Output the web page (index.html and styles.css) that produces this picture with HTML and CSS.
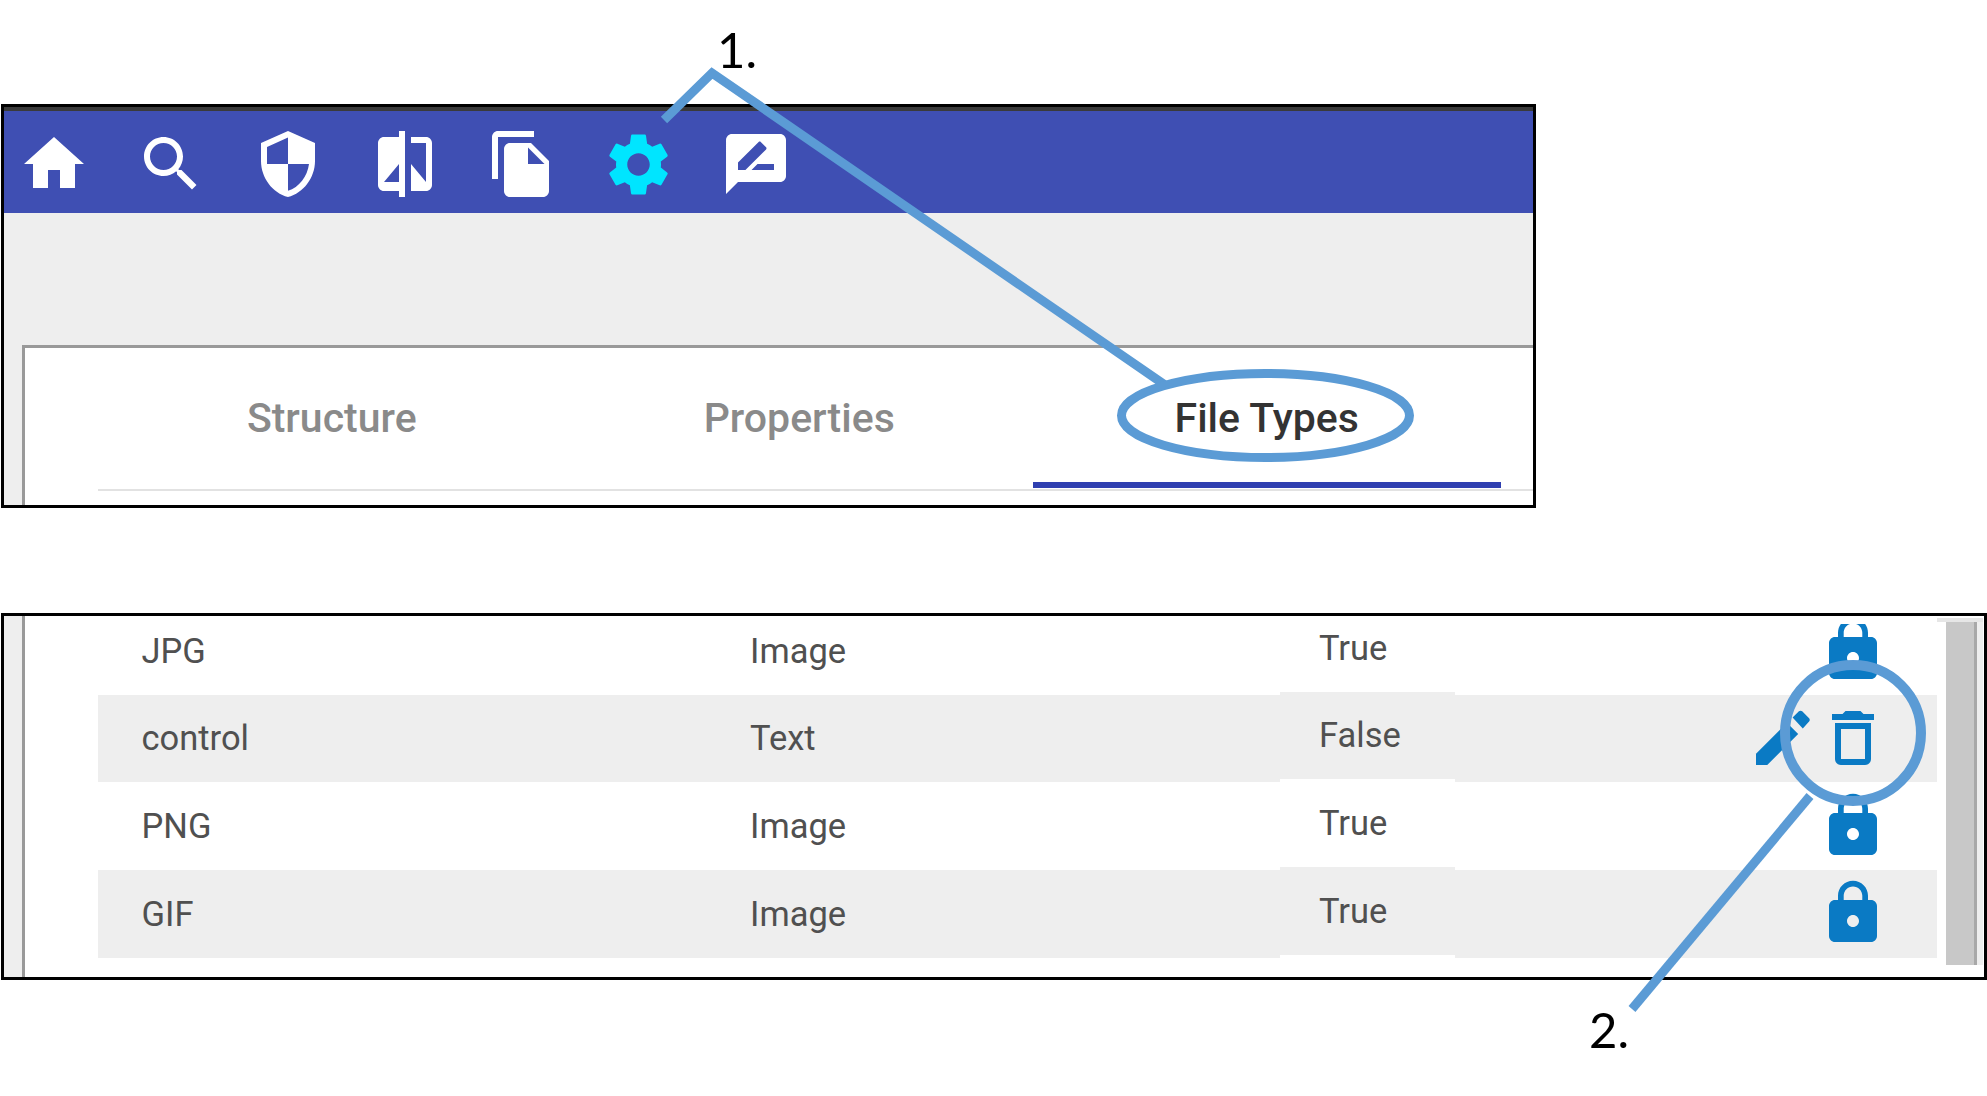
FILE: index.html
```html
<!DOCTYPE html>
<html lang="en">
<head>
    <meta charset="UTF-8">
    <meta name="viewport" content="width=device-width, initial-scale=1.0">
    <title>File Types</title>
    <link rel="stylesheet" href="styles.css">
</head>
<body>
    <div class="frame frame-top">
        <div class="toolbar">
            <svg class="icon" viewBox="0 0 24 24"><path d="M10 20v-6h4v6h5v-8h3L12 3 2 12h3v8z"/></svg>
            <svg class="icon" viewBox="0 0 24 24"><path d="M15.5 14h-.79l-.28-.27C15.41 12.59 16 11.11 16 9.5 16 5.91 13.09 3 9.5 3S3 5.91 3 9.5 5.91 16 9.5 16c1.61 0 3.09-.59 4.23-1.57l.27.28v.79l5 4.99L20.49 19l-4.99-5zm-6 0C7.01 14 5 11.99 5 9.5S7.01 5 9.5 5 14 7.01 14 9.5 11.99 14 9.5 14z"/></svg>
            <svg class="icon" viewBox="0 0 24 24"><path d="M12 1L3 5v6c0 5.55 3.84 10.74 9 12 5.16-1.26 9-6.45 9-12V5l-9-4zm0 10.99h7c-.53 4.12-3.28 7.79-7 8.94V12H5V6.3l7-3.11v8.8z"/></svg>
            <svg class="icon" viewBox="0 0 24 24"><path d="M10 3H5c-1.1 0-2 .9-2 2v14c0 1.1.9 2 2 2h5v2h2V1h-2v2zm0 15H5l5-6v6zm9-15h-5v2h5v13l-5-6v9h5c1.1 0 2-.9 2-2V5c0-1.1-.9-2-2-2z"/></svg>
            <svg class="icon" viewBox="0 0 24 24"><path d="M16 1H4c-1.1 0-2 .9-2 2v14h2V3h12V1zm-1 4l6 6v10c0 1.1-.9 2-2 2H7.99C6.89 23 6 22.1 6 21l.01-14c0-1.1.89-2 1.99-2h7zm-1 7h5.5L14 6.5V12z"/></svg>
            <svg class="icon icon-active" viewBox="0 0 24 24"><path d="M19.14 12.94c.04-.3.06-.61.06-.94 0-.32-.02-.64-.07-.94l2.03-1.58c.18-.14.23-.41.12-.61l-1.92-3.32c-.12-.22-.37-.29-.59-.22l-2.39.96c-.5-.38-1.03-.7-1.62-.94l-.36-2.54c-.04-.24-.24-.41-.48-.41h-3.84c-.24 0-.43.17-.47.41l-.36 2.54c-.59.24-1.13.57-1.62.94l-2.39-.96c-.22-.08-.47 0-.59.22L2.74 8.87c-.12.21-.08.47.12.61l2.03 1.58c-.05.3-.09.63-.09.94s.02.64.07.94l-2.03 1.58c-.18.14-.23.41-.12.61l1.92 3.32c.12.22.37.29.59.22l2.39-.96c.5.38 1.03.7 1.62.94l.36 2.54c.05.24.24.41.48.41h3.84c.24 0 .44-.17.47-.41l.36-2.54c.59-.24 1.13-.56 1.62-.94l2.39.96c.22.08.47 0 .59-.22l1.92-3.32c.12-.22.07-.47-.12-.61l-2.01-1.58zM12 15.6c-1.98 0-3.6-1.62-3.6-3.6s1.62-3.6 3.6-3.6 3.6 1.62 3.6 3.6-1.62 3.6-3.6 3.6z"/></svg>
            <svg class="icon" viewBox="0 0 24 24"><path d="M20 2H4c-1.1 0-1.99.9-1.99 2L2 22l4-4h14c1.1 0 2-.9 2-2V4c0-1.1-.9-2-2-2zM6 14v-2.47l6.88-6.88c.2-.2.51-.2.71 0l1.77 1.77c.2.2.2.51 0 .71L8.47 14H6zm12 0h-7.5l2-2H18v2z"/></svg>
        </div>
        <div class="band"></div>
        <div class="panel">
            <div class="tabs">
                <a class="tab">Structure</a>
                <a class="tab">Properties</a>
                <a class="tab active">File Types</a>
            </div>
        </div>
    </div>

    <div class="frame frame-bottom">
        <div class="sheet">
            <div class="rows-clip">
                <div class="rows">
                    <div class="row">
                        <div class="cell name">JPG</div>
                        <div class="cell kind">Image</div>
                        <div class="cell flag">True</div>
                        <div class="cell actions">
                            <svg class="action lock" viewBox="0 0 24 24"><path d="M18 8h-1V6.6c0-2.76-2.24-5-5-5s-5 2.24-5 5V8H6c-1.1 0-2 .9-2 2v10c0 1.1.9 2 2 2h12c1.1 0 2-.9 2-2V10c0-1.1-.9-2-2-2zm-6 9c-1.1 0-2-.9-2-2s.9-2 2-2 2 .9 2 2-.9 2-2 2zm3.1-9H8.9V6.6c0-1.71 1.39-3.1 3.1-3.1 1.71 0 3.1 1.39 3.1 3.1V8z"/></svg>
                        </div>
                    </div>
                    <div class="row">
                        <div class="cell name">control</div>
                        <div class="cell kind">Text</div>
                        <div class="cell flag">False</div>
                        <div class="cell actions">
                            <svg class="action pencil" viewBox="0 0 24 24"><path d="M3 17.25V21h3.75L17.06 10.69l-3.75-3.75z"/><path d="M17.3 3.1c.3-.3.8-.3 1.1 0l2.3 2.3c.3.3.3.8 0 1.1L18.6 8.8l-3.4-3.6z"/></svg>
                            <svg class="action" viewBox="0 0 24 24"><path d="M6 19c0 1.1.9 2 2 2h8c1.1 0 2-.9 2-2V7H6v12zM8 9h8v10H8V9zm7.5-5l-1-1h-5l-1 1H5v2h14V4z"/></svg>
                        </div>
                    </div>
                    <div class="row">
                        <div class="cell name">PNG</div>
                        <div class="cell kind">Image</div>
                        <div class="cell flag">True</div>
                        <div class="cell actions">
                            <svg class="action lock" viewBox="0 0 24 24"><path d="M18 8h-1V6.6c0-2.76-2.24-5-5-5s-5 2.24-5 5V8H6c-1.1 0-2 .9-2 2v10c0 1.1.9 2 2 2h12c1.1 0 2-.9 2-2V10c0-1.1-.9-2-2-2zm-6 9c-1.1 0-2-.9-2-2s.9-2 2-2 2 .9 2 2-.9 2-2 2zm3.1-9H8.9V6.6c0-1.71 1.39-3.1 3.1-3.1 1.71 0 3.1 1.39 3.1 3.1V8z"/></svg>
                        </div>
                    </div>
                    <div class="row">
                        <div class="cell name">GIF</div>
                        <div class="cell kind">Image</div>
                        <div class="cell flag">True</div>
                        <div class="cell actions">
                            <svg class="action lock" viewBox="0 0 24 24"><path d="M18 8h-1V6.6c0-2.76-2.24-5-5-5s-5 2.24-5 5V8H6c-1.1 0-2 .9-2 2v10c0 1.1.9 2 2 2h12c1.1 0 2-.9 2-2V10c0-1.1-.9-2-2-2zm-6 9c-1.1 0-2-.9-2-2s.9-2 2-2 2 .9 2 2-.9 2-2 2zm3.1-9H8.9V6.6c0-1.71 1.39-3.1 3.1-3.1 1.71 0 3.1 1.39 3.1 3.1V8z"/></svg>
                        </div>
                    </div>
                </div>
            </div>
            <div class="scrollbar"><div class="thumb"></div></div>
        </div>
    </div>

    <!-- callouts drawn over the screenshots -->
    <svg class="callouts" viewBox="0 0 1987 1096">
        <polyline points="664,120 712,73 1165,385"/>
        <ellipse cx="1265.5" cy="415.5" rx="144" ry="42"/>
        <circle class="ring" cx="1853" cy="733" r="68"/>
        <line x1="1810" y1="796" x2="1632" y2="1009"/>
    </svg>
    <div class="note note-one">1.</div>
    <div class="note note-two">2.</div>
</body>
</html>
```

FILE: styles.css
```css
html, body {
    margin: 0;
    padding: 0;
    height: 100%;
    overflow: hidden;
}
body {
    position: relative;
    height: 1096px;
    background: #fff;
    font-family: Roboto, "Liberation Sans", sans-serif;
    padding-top: 104px;
    box-sizing: border-box;
}
.frame {
    margin-left: 1px;
    border: 3px solid #000;
    box-sizing: border-box;
}
.frame-top {
    width: 1535px;
    height: 404px;
    display: flex;
    flex-direction: column;
    background: #eee;
}
.frame-bottom {
    width: 1986px;
    height: 367px;
    margin-top: 105px;
}

/* toolbar */
.toolbar {
    height: 106px;
    flex: none;
    display: flex;
    align-items: flex-start;
    gap: 45px;
    padding: 17px 0 0 14px;
    box-sizing: border-box;
    background: #3f4fb3;
    border-top: 4px solid #3a3a3a;
}
.icon {
    width: 72px;
    height: 72px;
    flex: none;
    fill: #fff;
}
.icon-active {
    width: 75px;
    height: 75px;
    margin: -1px -0.5px 0 -2.5px;
    fill: #00e5ff;
}
.band {
    height: 132px;
    flex: none;
}

/* tabs */
.panel {
    flex: 1;
    margin-left: 18px;
    background: #fff;
    border-top: 3px solid #999;
    border-left: 3px solid #999;
}
.tabs {
    display: flex;
    margin-left: 73px;
    height: 143px;
    box-sizing: border-box;
    border-bottom: 2px solid #e2e2e2;
}
.tab {
    width: 467.5px;
    height: 140px;
    display: flex;
    align-items: center;
    justify-content: center;
    box-sizing: border-box;
    padding-top: 6px;
    border-bottom: 6px solid transparent;
    font-size: 41px;
    font-weight: 500;
    color: #8a8a8a;
}
.tab.active {
    color: #333;
    border-bottom-color: #2f3fb0;
}

/* file type rows */
.sheet {
    height: 100%;
    display: flex;
    padding-left: 18px;
    box-sizing: border-box;
    background: linear-gradient(#eee, #eee) left / 18px 100% no-repeat;
}
.rows-clip {
    flex: none;
    width: 1839px;
    padding: 8px 0 0 73px;
    border-left: 3px solid #999;
    background: #fff;
}
.rows {
    height: 100%;
    overflow: hidden;
}
.row {
    display: flex;
    height: 87.67px;
    font-size: 34.5px;
    color: #505050;
}
.row:first-child {
    margin-top: -17px;
}
.row:nth-child(even) {
    background: #eee;
}
.cell {
    display: flex;
    align-items: center;
    box-sizing: border-box;
}
.name {
    width: 652px;
    padding-left: 43.5px;
}
.kind {
    width: 530px;
}
.flag {
    width: 175px;
    padding-left: 39px;
    margin-top: -3px;
    margin-bottom: 3px;
    background: #fff;
}
.row:nth-child(even) .flag {
    background: #eee;
}
.row:last-child .flag {
    margin-bottom: 0;
    border-bottom: 3px solid #fff;
}
.actions {
    flex: 1;
    justify-content: flex-end;
    padding-right: 48px;
}
.action {
    width: 72px;
    height: 72px;
    flex: none;
    fill: #0a7ac4;
}
.lock {
    margin-top: -3px;
}
.pencil {
    margin-right: -2px;
}
.scrollbar {
    flex: none;
    width: 46px;
    margin: 2px 0 12px;
    padding-left: 9px;
    box-sizing: border-box;
    border-top: 4px solid #e6e6e6;
}
.thumb {
    width: 31px;
    height: 100%;
    box-sizing: border-box;
    background: #c8c8c8;
    border-right: 3px solid #a8a8a8;
    box-shadow: 6px 0 0 #eee;
}

/* callouts */
.callouts {
    position: absolute;
    left: 0;
    top: 0;
    width: 1987px;
    height: 1096px;
    fill: none;
    stroke: #5b9bd5;
    stroke-width: 9;
}
.ring {
    stroke-width: 10;
}
.note {
    position: absolute;
    font-family: Lato, sans-serif;
    font-size: 49px;
    line-height: 1;
    color: #000;
}
.note-one {
    left: 717px;
    top: 25px;
}
.note-two {
    left: 1589px;
    top: 1005px;
}
```
